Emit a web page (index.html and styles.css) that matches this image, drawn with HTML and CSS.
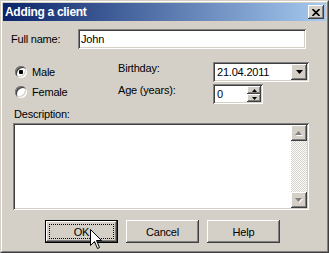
FILE: index.html
```html
<!DOCTYPE html>
<html lang="en">
<head>
    <meta charset="UTF-8">
    <title>Adding a client</title>
    <link rel="stylesheet" href="styles.css">
</head>
<body>
    <div class="window">
        <div class="frame">
            <div class="titlebar">
                <span class="title">Adding a client</span>
                <div class="close">
                    <svg width="8" height="7" viewBox="0 0 8 7"><path d="M0.5 0 L7.5 7 M7.5 0 L0.5 7" stroke="#000" stroke-width="1.6"/></svg>
                </div>
            </div>

            <div class="content">
                <div class="row-name">
                    <span class="lbl-name">Full name:</span>
                    <div class="field name-field">John</div>
                </div>

                <div class="mid">
                    <div class="radios">
                        <div class="radio-item"><span class="radio checked"></span>Male</div>
                        <div class="radio-item"><span class="radio"></span>Female</div>
                    </div>
                    <div class="lbl">Birthday:</div>
                    <div class="field date-field">
                        <span class="val">21.04.2011</span>
                        <span class="raised drop-btn"><svg width="7" height="4" viewBox="0 0 7 4"><path d="M0 0h7L3.5 4z" fill="#000"/></svg></span>
                    </div>
                    <div class="lbl">Age (years):</div>
                    <div class="field spin-field">
                        <span class="val">0</span>
                        <span class="spin-btns">
                            <span class="raised spin-btn"><svg width="5" height="3" viewBox="0 0 5 3"><path d="M2.5 0L5 3H0z" fill="#000"/></svg></span>
                            <span class="raised spin-btn"><svg width="5" height="3" viewBox="0 0 5 3"><path d="M0 0h5L2.5 3z" fill="#000"/></svg></span>
                        </span>
                    </div>
                </div>

                <div class="lbl desc-lbl">Description:</div>
                <div class="field memo">
                    <div class="scrollbar">
                        <span class="raised sb-btn"><svg width="8" height="5" viewBox="0 0 8 5"><path d="M4.5 1L8 5H1z" fill="#fff"/><path d="M3.5 0L7 4H0z" fill="#808080"/></svg></span>
                        <span class="sb-track"></span>
                        <span class="raised sb-btn"><svg width="8" height="5" viewBox="0 0 8 5"><path d="M1 1h7L4.5 5z" fill="#fff"/><path d="M0 0h7L3.5 4z" fill="#808080"/></svg></span>
                    </div>
                </div>

                <div class="buttons">
                    <div class="raised btn btn-default"><span class="focus">OK</span></div>
                    <div class="raised btn">Cancel</div>
                    <div class="raised btn">Help</div>
                </div>
            </div>
        </div>

        <!-- mouse pointer over the OK button -->
        <svg class="cursor" width="13" height="21" viewBox="0 0 13 21">
            <path d="M0.5 0.5 V16.5 L4.5 12.5 L7.5 19.5 L9.5 18.5 L6.5 11.5 H11.5 Z" fill="#fff" stroke="#000" stroke-width="1"/>
        </svg>
    </div>
</body>
</html>
```

FILE: styles.css
```css
* {
    margin: 0;
    padding: 0;
    box-sizing: border-box;
}
body {
    font-family: 'Liberation Sans', Arial, sans-serif;
    font-size: 11px;
    letter-spacing: -0.2px;
    color: #000;
    background: #d4d0c8;
}
.window {
    position: relative;
    width: 329px;
    height: 253px;
    border: 1px solid;
    border-color: #d4d0c8 #404040 #404040 #d4d0c8;
    background: #d4d0c8;
}
.frame {
    height: 100%;
    border: 1px solid;
    border-color: #fff #808080 #808080 #fff;
    padding: 1px;
}
/* Title bar */
.titlebar {
    height: 18px;
    display: flex;
    align-items: center;
    justify-content: space-between;
    padding: 0 2px;
    background: linear-gradient(to right, #0a246a, #a6caf0);
}
.title {
    color: #fff;
    font-weight: bold;
    font-size: 12px;
    letter-spacing: -0.3px;
}
.raised {
    background: #d4d0c8;
    box-shadow: inset -1px -1px #404040, inset 1px 1px #fff, inset -2px -2px #808080, inset 2px 2px #d4d0c8;
}
.close {
    width: 16px;
    height: 14px;
    display: flex;
    align-items: center;
    justify-content: center;
    background: #d4d0c8;
    box-shadow: inset -1px -1px #404040, inset 1px 1px #fff, inset -2px -2px #808080, inset 2px 2px #d4d0c8;
}
/* Fields */
.field {
    background: #fff;
    box-shadow: inset 1px 1px #808080, inset -1px -1px #fff, inset 2px 2px #404040, inset -2px -2px #d4d0c8;
    padding: 2px;
}
.content {
    padding-top: 8px;
}
.row-name {
    display: flex;
    align-items: center;
    padding-left: 8px;
}
.lbl-name {
    width: 67px;
}
.name-field {
    width: 228px;
    height: 20px;
    padding: 2px 3px;
    line-height: 16px;
}
.mid {
    display: grid;
    grid-template-columns: 103px 95px 96px;
    grid-template-rows: 20px 20px;
    row-gap: 2px;
    margin: 13px 0 0 12px;
}
.radios {
    grid-row: 1 / 3;
    display: flex;
    flex-direction: column;
    gap: 7px;
    padding-top: 3px;
}
.radio-item {
    display: flex;
    align-items: center;
    gap: 5px;
    height: 13px;
}
.radio {
    position: relative;
    width: 12px;
    height: 12px;
    border-radius: 50%;
    background: #fff;
    box-shadow: inset 1px 1px #808080, inset -1px -1px #fff, inset 2px 2px #404040, inset -2px -2px #d4d0c8;
}
.radio.checked::after {
    content: '';
    position: absolute;
    left: 4px;
    top: 4px;
    width: 4px;
    height: 4px;
    border-radius: 1px;
    background: #000;
}
.lbl {
    line-height: 13px;
}
.date-field,
.spin-field {
    display: flex;
    justify-content: space-between;
    align-items: center;
}
.val {
    padding-left: 2px;
    line-height: 16px;
}
.drop-btn {
    width: 16px;
    height: 16px;
    display: flex;
    align-items: center;
    justify-content: center;
}
.spin-field {
    width: 50px;
}
.spin-btns {
    display: flex;
    flex-direction: column;
    width: 14px;
    height: 16px;
}
.spin-btn {
    height: 8px;
    display: flex;
    align-items: center;
    justify-content: center;
}
/* Description memo */
.desc-lbl {
    margin: 4px 0 0 11px;
}
.memo {
    width: 296px;
    height: 87px;
    margin: 2px 0 0 10px;
    display: flex;
    justify-content: flex-end;
}
.scrollbar {
    width: 16px;
    display: flex;
    flex-direction: column;
}
.sb-btn {
    height: 16px;
    display: flex;
    align-items: center;
    justify-content: center;
}
.sb-track {
    flex: 1;
    background: repeating-conic-gradient(#fff 0 25%, #d4d0c8 0 50%) 0 0 / 2px 2px;
}
/* Buttons */
.buttons {
    display: flex;
    gap: 8px;
    margin: 10px 0 0 42px;
}
.btn {
    width: 73px;
    height: 23px;
    display: flex;
    align-items: center;
    justify-content: center;
}
.btn-default {
    border: 1px solid #000;
    padding: 3px;
}
.focus {
    flex: 1;
    align-self: stretch;
    display: flex;
    align-items: center;
    justify-content: center;
    border: 1px dotted #000;
}
.cursor {
    position: absolute;
    left: 89px;
    top: 228px;
}
```
